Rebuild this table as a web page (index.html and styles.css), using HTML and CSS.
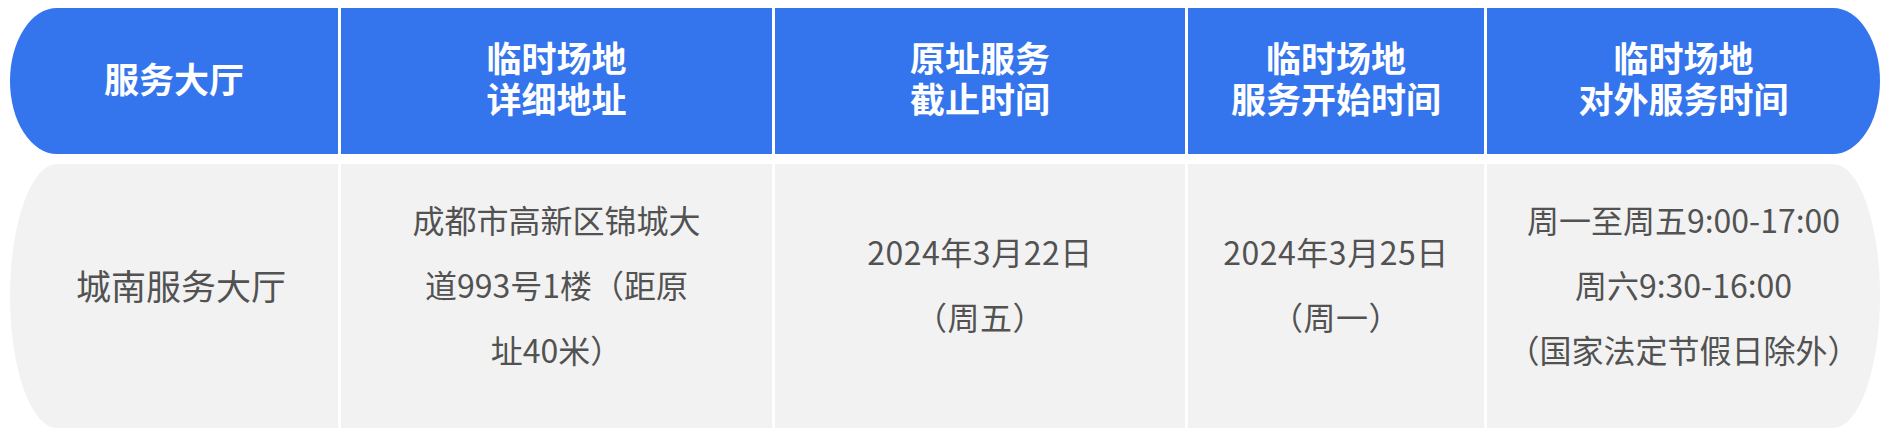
FILE: index.html
```html
<!DOCTYPE html>
<html lang="zh-CN">
<head>
<meta charset="utf-8">
<title>服务大厅临时场地</title>
<link rel="stylesheet" href="styles.css">
</head>
<body>
<div class="table">
  <div class="row head">
    <div class="cell first"><span class="ln">服务大厅</span></div>
    <div class="cell"><span class="ln">临时场地</span><span class="ln">详细地址</span></div>
    <div class="cell"><span class="ln">原址服务</span><span class="ln">截止时间</span></div>
    <div class="cell"><span class="ln">临时场地</span><span class="ln">服务开始时间</span></div>
    <div class="cell last"><span class="ln">临时场地</span><span class="ln">对外服务时间</span></div>
  </div>
  <div class="row body-row">
    <div class="cell first name">城南服务大厅</div>
    <div class="cell">成都市高新区锦城大<br>道993号1楼（距原<br>址40米）</div>
    <div class="cell date">2024年3月22日<br>（周五）</div>
    <div class="cell date">2024年3月25日<br>（周一）</div>
    <div class="cell last">周一至周五9:00-17:00<br>周六9:30-16:00<br>（国家法定节假日除外）</div>
  </div>
</div>
</body>
</html>
```

FILE: styles.css
```css
* { box-sizing: border-box; }
html, body { margin: 0; padding: 0; background: #ffffff; }
body {
  width: 1890px;
  height: 435px;
  overflow: hidden;
  font-family: "Noto Sans CJK SC", "Noto Sans", sans-serif;
}
.table {
  padding: 8px 10px 0 10px;
  display: flex;
  flex-direction: column;
  gap: 10px;
}
.row {
  display: grid;
  grid-template-columns: 328px 431px 410px 296px 393px;
  column-gap: 3px;
}
.cell {
  display: flex;
  flex-direction: column;
  align-items: center;
  justify-content: center;
  text-align: center;
}
.first { border-radius: 47px 0 0 47px / 50% 0 0 50%; }
.last { border-radius: 0 47px 47px 0 / 0 50% 50% 0; }
.head { height: 146px; }
.head .cell {
  background: #3475ee;
  color: #ffffff;
  font-weight: 700;
  font-size: 35px;
  line-height: 41px;
  padding-bottom: 8px;
}
.head .ln {
  display: block;
  height: 41px;
  line-height: 41px;
}
.body-row { height: 264px; }
.body-row .cell {
  display: block;
  padding-top: 0;
  background: #f2f2f2;
  color: #525252;
  font-size: 32px;
  line-height: 65px;
}
.body-row .cell {
  display: flex;
  padding-bottom: 24px;
}
.body-row .date { letter-spacing: 0.5px; }
.body-row .name {
  font-size: 35px;
  padding-left: 14px;
}
```
